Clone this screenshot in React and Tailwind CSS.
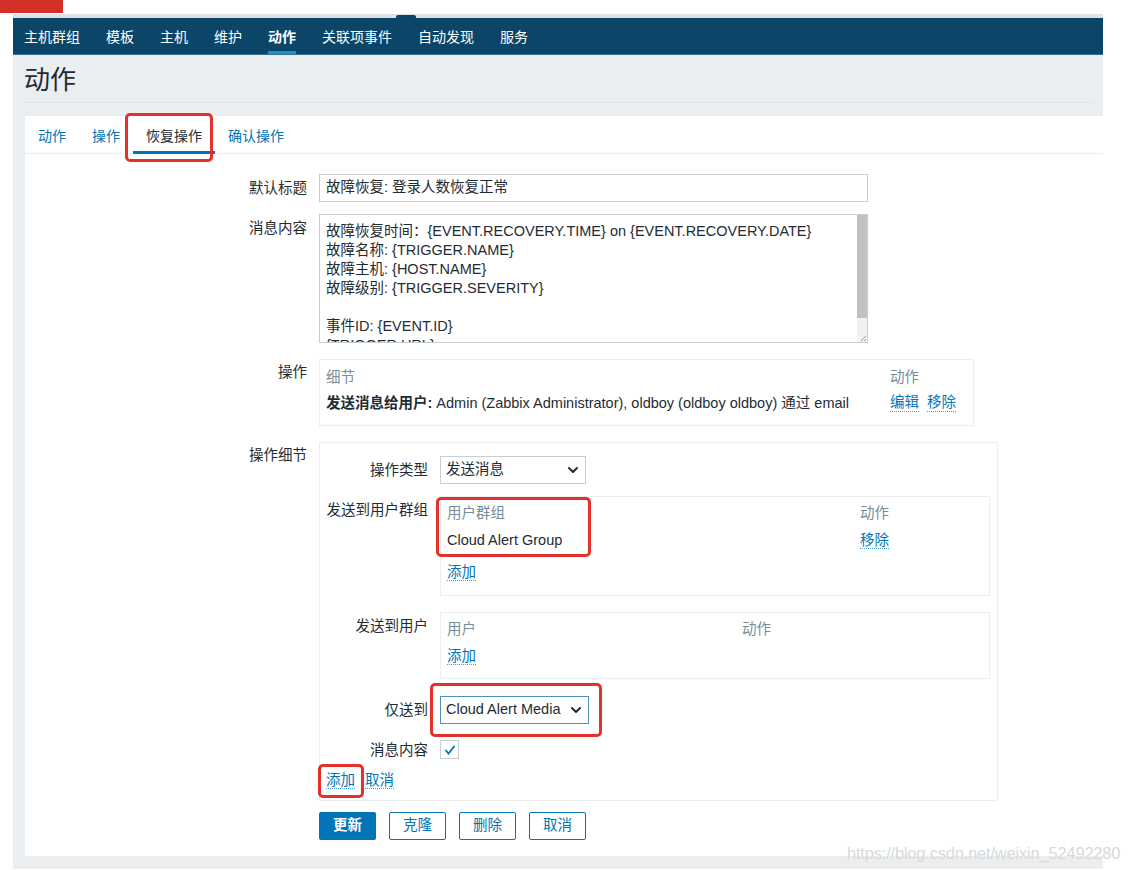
import React from 'react'

const navItems = ['主机群组', '模板', '主机', '维护', '动作', '关联项事件', '自动发现', '服务']
const tabs = ['动作', '操作', '恢复操作', '确认操作']

const messageLines = [
    '故障恢复时间：{EVENT.RECOVERY.TIME} on {EVENT.RECOVERY.DATE}',
    '故障名称: {TRIGGER.NAME}',
    '故障主机: {HOST.NAME}',
    '故障级别: {TRIGGER.SEVERITY}',
    '',
    '事件ID: {EVENT.ID}',
    '{TRIGGER.URL}',
]

function Link({ children }) {
    return <span className="text-[#0275b8] border-b border-dotted border-[#4a9bd0] leading-[16px]">{children}</span>
}

function Chevron() {
    return (
        <svg width="12" height="12" viewBox="0 0 12 12" className="shrink-0">
            <path d="M2 4 L6 8 L10 4" fill="none" stroke="#1f2c33" strokeWidth="2" strokeLinecap="round" strokeLinejoin="round" />
        </svg>
    )
}

function Select({ value, width, focused }) {
    return (
        <div className={`${width} h-[28px] border ${focused ? 'border-[#4f8fbd]' : 'border-[#c5ced3]'} bg-white flex items-center justify-between pl-[5px] pr-[6px]`}>
            <span className="whitespace-nowrap">{value}</span>
            <Chevron />
        </div>
    )
}

function Row({ label, labelPad, center, children, className }) {
    return (
        <div className={`flex ${center ? 'items-center' : 'items-start'} ${className || ''}`}>
            <div className={`w-[282px] text-right leading-[18px] ${labelPad || ''}`}>{label}</div>
            <div className="ml-[12px]">{children}</div>
        </div>
    )
}

function SubRow({ label, labelPad, center, children, className }) {
    return (
        <div className={`flex ${center ? 'items-center' : 'items-start'} ${className || ''}`}>
            <div className={`w-[108px] text-right leading-[18px] whitespace-nowrap ${labelPad || ''}`}>{label}</div>
            <div className="ml-[12px]">{children}</div>
        </div>
    )
}

function RedMark({ className }) {
    return <div className={`absolute border-[3px] border-[#e5312b] rounded-[5px] ${className}`}></div>
}

export default function App() {
    return (
        <div className="relative w-[1128px] h-[870px] bg-white overflow-hidden text-[14.5px] text-[#1f2c33] font-['Liberation_Sans','Noto_Sans_CJK_SC',sans-serif]">
            {/* top strip */}
            <div className="h-[14px]">
                <div className="w-[63px] h-[13px] bg-[#d3302a]"></div>
            </div>
            <div className="ml-[13px] w-[1090px] h-[4px] bg-[#dfe3e7]"></div>
            <div className="absolute left-[396px] top-[15px] w-[20px] h-[4px] bg-[#0b4669] rounded-t-[2px]"></div>

            {/* main nav */}
            <nav className="ml-[13px] w-[1090px] h-[37px] bg-[#0b4669] border-b border-[#3d6f8c] flex items-stretch pl-[11px] gap-[26px] text-[14px]">
                {navItems.map((item) => (
                    <div key={item} className="relative flex items-center pt-[2px] text-white">
                        <span className={item === '动作' ? 'font-bold' : ''}>{item}</span>
                        {item === '动作' && <div className="absolute left-0 right-0 bottom-0 h-[3px] bg-[#1c8ed6]"></div>}
                    </div>
                ))}
            </nav>

            {/* page */}
            <div className="ml-[13px] w-[1090px] bg-[#ebeef0] pb-[13px]">
                <div className="h-[48px] mx-[11px] pt-[4px] flex items-center text-[26px] border-b border-[#dfe3e7]">动作</div>
                <div className="ml-[12px] mt-[13px] bg-white h-[740px]">
                    {/* tabs */}
                    <div className="h-[38px] border-b border-[#ebeef0] flex text-[14px]">
                        {tabs.map((tab) => (
                            <div key={tab} className={`relative flex items-center pt-[4px] px-[13px] ${tab === '恢复操作' ? 'text-[#1f2c33]' : 'text-[#0275b8]'}`}>
                                {tab}
                                {tab === '恢复操作' && <div className="absolute left-0 right-0 bottom-[-1px] h-[3px] bg-[#0275b8]"></div>}
                            </div>
                        ))}
                    </div>

                    {/* form */}
                    <div className="pt-[20px]">
                        <Row label="默认标题" center>
                            <div className="w-[549px] h-[28px] border border-[#c5ced3] flex items-center px-[6px]">故障恢复: 登录人数恢复正常</div>
                        </Row>

                        <Row label="消息内容" labelPad="pt-[5px]" className="mt-[12px]">
                            <div className="w-[549px] h-[129px] border border-[#c5ced3] flex overflow-hidden">
                                <div className="flex-1 pl-[6px] pt-[7px] leading-[19px] overflow-hidden">
                                    {messageLines.map((line, i) => (
                                        <div key={i} className="h-[19px] whitespace-nowrap">{line}</div>
                                    ))}
                                </div>
                                <div className="w-[10px] bg-[#f1f1f1] flex flex-col">
                                    <div className="h-[103px] bg-[#c1c1c1]"></div>
                                    <div className="flex-1"></div>
                                    <div className="h-[10px] flex items-end justify-end">
                                        <svg width="8" height="8" viewBox="0 0 8 8">
                                            <path d="M7 2 L2 7 M7 5 L5 7" stroke="#999" strokeWidth="1" />
                                        </svg>
                                    </div>
                                </div>
                            </div>
                        </Row>

                        <Row label="操作" labelPad="pt-[4px]" className="mt-[16px]">
                            <div className="w-[655px] h-[67px] border border-[#ebeef0] pl-[6px] pt-[8px]">
                                <div className="flex h-[18px] leading-[18px] text-[#768d99]">
                                    <div className="w-[564px]">细节</div>
                                    <div>动作</div>
                                </div>
                                <div className="flex h-[18px] leading-[18px] mt-[8px]">
                                    <div className="w-[564px] whitespace-nowrap"><span className="font-bold">发送消息给用户:</span> Admin (Zabbix Administrator), oldboy (oldboy oldboy) 通过 email</div>
                                    <div className="flex gap-[8px]"><Link>编辑</Link><Link>移除</Link></div>
                                </div>
                            </div>
                        </Row>

                        <Row label="操作细节" labelPad="pt-[4px]" className="mt-[16px]">
                            <div className="w-[679px] h-[359px] border border-[#ebeef0] pt-[13px]">
                                <SubRow label="操作类型" center>
                                    <Select value="发送消息" width="w-[146px]" />
                                </SubRow>

                                <SubRow label="发送到用户群组" labelPad="pt-[5px]" className="mt-[12px]">
                                    <div className="w-[550px] h-[100px] border border-[#ebeef0] pl-[6px] pt-[7px]">
                                        <div className="flex leading-[18px] text-[#768d99]">
                                            <div className="w-[413px]">用户群组</div>
                                            <div>动作</div>
                                        </div>
                                        <div className="flex leading-[18px] mt-[9px]">
                                            <div className="w-[413px]">Cloud Alert Group</div>
                                            <div><Link>移除</Link></div>
                                        </div>
                                        <div className="leading-[18px] mt-[14px]"><Link>添加</Link></div>
                                    </div>
                                </SubRow>

                                <SubRow label="发送到用户" labelPad="pt-[5px]" className="mt-[16px]">
                                    <div className="w-[550px] h-[67px] border border-[#ebeef0] pl-[6px] pt-[7px]">
                                        <div className="flex leading-[18px] text-[#768d99]">
                                            <div className="w-[295px]">用户</div>
                                            <div>动作</div>
                                        </div>
                                        <div className="leading-[18px] mt-[9px]"><Link>添加</Link></div>
                                    </div>
                                </SubRow>

                                <SubRow label="仅送到" center className="mt-[17px]">
                                    <Select value="Cloud Alert Media" width="w-[149px]" focused />
                                </SubRow>

                                <SubRow label="消息内容" center className="mt-[16px]">
                                    <div className="w-[19px] h-[19px] border border-[#c5ced3] bg-white flex items-center justify-center">
                                        <svg width="14" height="14" viewBox="0 0 14 14">
                                            <path d="M2.5 7 L5.5 10.5 L11.5 3" fill="none" stroke="#0275b8" strokeWidth="1.8" />
                                        </svg>
                                    </div>
                                </SubRow>

                                <div className="pl-[6px] mt-[13px] leading-[18px] flex gap-[10px]">
                                    <Link>添加</Link>
                                    <Link>取消</Link>
                                </div>
                            </div>
                        </Row>

                        <div className="flex gap-[13px] pl-[294px] mt-[11px]">
                            <div className="w-[57px] h-[28px] bg-[#0275b8] text-white flex items-center justify-center font-bold rounded-[2px]">更新</div>
                            <div className="w-[57px] h-[28px] border border-[#0275b8] text-[#0275b8] flex items-center justify-center rounded-[2px]">克隆</div>
                            <div className="w-[57px] h-[28px] border border-[#0275b8] text-[#0275b8] flex items-center justify-center rounded-[2px]">删除</div>
                            <div className="w-[57px] h-[28px] border border-[#0275b8] text-[#0275b8] flex items-center justify-center rounded-[2px]">取消</div>
                        </div>
                    </div>
                </div>
            </div>

            {/* annotation marks */}
            <RedMark className="left-[125px] top-[113px] w-[88px] h-[49px]" />
            <RedMark className="left-[436px] top-[497px] w-[155px] h-[60px]" />
            <RedMark className="left-[430px] top-[683px] w-[172px] h-[54px]" />
            <RedMark className="left-[318px] top-[764px] w-[46px] h-[34px]" />

            {/* watermark */}
            <div className="absolute left-[847px] top-[841px] text-[16.5px] text-[#d9d9d9] tracking-[-0.2px]">https://blog.csdn.net/weixin_52492280</div>
        </div>
    )
}
